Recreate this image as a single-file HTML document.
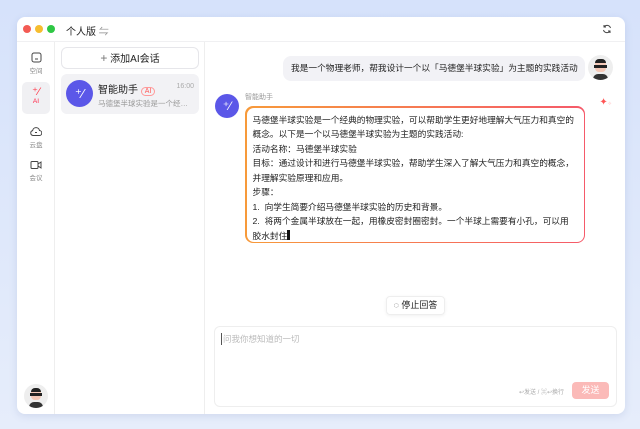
<!DOCTYPE html><html><head><meta charset="utf-8"><style>
*{margin:0;padding:0;box-sizing:border-box}
body{width:640px;height:429px;background:linear-gradient(180deg,#d6e2fb,#e6edfb);font-family:"Liberation Sans","Noto Sans CJK SC",sans-serif;position:relative;overflow:hidden;color:#222}
.win{position:absolute;left:17px;top:17px;width:608px;height:397px;background:#fff;border-radius:8px;box-shadow:0 2px 8px rgba(80,100,160,.15);overflow:hidden}
.tb{height:25px;border-bottom:1px solid #f0f0f2;position:relative}
.dot{position:absolute;top:8px;width:8px;height:8px;border-radius:50%}
.side{position:absolute;left:0;top:25px;width:38px;bottom:0;border-right:1px solid #eee}
.list{position:absolute;left:38px;top:25px;width:150px;bottom:0;border-right:1px solid #eee}
.chat{position:absolute;left:188px;top:25px;right:0;bottom:0}
.ic{position:absolute;left:5px;width:28px;text-align:center;font-size:6.5px;color:#888}
.av{position:absolute;border-radius:50%;background:#5b57e8;color:#fff}
.ava{position:absolute;border-radius:50%;background:#eee;overflow:hidden}
</style></head><body>
<div class="win">
 <div class="tb">
  <div class="dot" style="left:6px;background:#f35b54"></div>
  <div class="dot" style="left:18px;background:#f6bd2f"></div>
  <div class="dot" style="left:30px;background:#2ec744"></div>
  <div style="position:absolute;left:49px;top:6px;font-size:10px">个人版 <span style="color:#888">⇋</span></div>
  <svg style="position:absolute;right:13px;top:7px" width="10" height="10" viewBox="0 0 10 10"><path d="M8.5 4A3.6 3.6 0 0 0 2 3M1.5 6A3.6 3.6 0 0 0 8 7" fill="none" stroke="#444" stroke-width="1"/><path d="M2 1v2h2M8 9V7H6" fill="none" stroke="#444" stroke-width="1"/></svg>
 </div>
 <div class="side">
  <div class="ic" style="top:10px"><svg width="11" height="11" viewBox="0 0 11 11"><rect x="1" y="1" width="9" height="9" rx="2" fill="none" stroke="#444"/><path d="M4 7h3" stroke="#444"/></svg><div>空间</div></div>
  <div class="ic" style="top:40px;height:32px;background:#f0f0f3;border-radius:5px;color:#f24;padding-top:4px"><div style="font-size:11px;color:#f34;line-height:12px">⁺⁄</div><div>AI</div></div>
  <div class="ic" style="top:84px"><svg width="12" height="11" viewBox="0 0 12 11"><path d="M3 9.5h6a2.5 2.5 0 0 0 .5-5A3.5 3.5 0 0 0 2.6 4.6 2.5 2.5 0 0 0 3 9.5z" fill="none" stroke="#444"/><path d="M5 6.5h2" stroke="#444"/></svg><div>云盘</div></div>
  <div class="ic" style="top:118px"><svg width="12" height="10" viewBox="0 0 12 10"><rect x="1" y="1.5" width="7" height="7" rx="1" fill="none" stroke="#444"/><path d="M8 4l3-2v6L8 6" fill="none" stroke="#444"/></svg><div>会议</div></div>
  <div class="ava" style="left:7px;top:342px;width:24px;height:24px"><div style="position:absolute;left:7px;top:4px;width:10px;height:12px;background:#f5c9b8;border-radius:4px;border-top:4px solid #222"></div><div style="position:absolute;left:6px;top:9px;width:12px;height:3px;background:#222"></div><div style="position:absolute;left:5px;top:18px;width:14px;height:8px;background:#333;border-radius:5px 5px 0 0"></div></div>
 </div>
 <div class="list">
  <div style="position:absolute;left:6px;top:5px;width:138px;height:22px;border:1px solid #e6e6ea;border-radius:6px;text-align:center;font-size:10px;line-height:20px"><span style="color:#777;font-size:12px">+</span> 添加AI会话</div>
  <div style="position:absolute;left:6px;top:32px;width:138px;height:40px;background:#f2f2f5;border-radius:6px">
   <div class="av" style="left:5px;top:6px;width:27px;height:27px;font-size:13px;text-align:center;line-height:27px">⁺⁄</div>
   <div style="position:absolute;left:37px;top:7px;font-size:10px">智能助手 <span style="font-size:7px;color:#f55;border:1px solid #f99;border-radius:6px;padding:0 3px">AI</span></div>
   <div style="position:absolute;right:5px;top:9px;font-size:7px;color:#aaa">16:00</div>
   <div style="position:absolute;left:37px;top:24px;font-size:7.5px;color:#999">马德堡半球实验是一个经…</div>
  </div>
 </div>
 <div class="chat">
  <div style="position:absolute;left:78px;top:14px;width:302px;height:25px;background:#f2f2f6;border-radius:8px;font-size:8.7px;line-height:25px;padding-left:8px;white-space:nowrap">我是一个物理老师，帮我设计一个以「马德堡半球实验」为主题的实践活动</div>
  <div class="ava" style="right:12px;top:13px;width:25px;height:25px"><div style="position:absolute;left:7px;top:4px;width:11px;height:13px;background:#f5c9b8;border-radius:4px;border-top:4px solid #222"></div><div style="position:absolute;left:6px;top:10px;width:13px;height:3px;background:#222"></div><div style="position:absolute;left:5px;top:19px;width:15px;height:8px;background:#333;border-radius:5px 5px 0 0"></div></div>
  <div class="av" style="left:10px;top:52px;width:24px;height:24px;font-size:12px;text-align:center;line-height:24px">⁺⁄</div>
  <div style="position:absolute;left:40px;top:50px;font-size:7px;color:#999">智能助手</div>
  <div style="position:absolute;right:13px;top:55px;color:#f55;font-size:10px">✦<span style="font-size:5px">⁘</span></div>
  <div style="position:absolute;left:40px;top:64px;width:340px;height:137px;border-radius:8px;padding:1.5px;background:linear-gradient(90deg,#f79a3a,#f55a6a)"><div style="background:#fff;border-radius:7px;height:100%;padding:5px 9px 5px 6px;font-size:8.7px;line-height:14.5px">马德堡半球实验是一个经典的物理实验，可以帮助学生更好地理解大气压力和真空的概念。以下是一个以马德堡半球实验为主题的实践活动:<br>活动名称：马德堡半球实验<br>目标：通过设计和进行马德堡半球实验，帮助学生深入了解大气压力和真空的概念，并理解实验原理和应用。<br>步骤：<br>1.&nbsp; 向学生简要介绍马德堡半球实验的历史和背景。<br>2.&nbsp; 将两个金属半球放在一起，用橡皮密封圈密封。一个半球上需要有小孔，可以用<br>胶水封住<span style="display:inline-block;width:3px;height:10px;background:#111;vertical-align:-1px"></span></div></div>
  <div style="position:absolute;left:181px;top:254px;width:59px;height:19px;border:1px solid #eee;border-radius:4px;box-shadow:0 1px 3px rgba(0,0,0,.06);font-size:9px;line-height:17px;text-align:center">◌ 停止回答</div>
  <div style="position:absolute;left:9px;top:284px;width:403px;height:81px;border:1px solid #eee;border-radius:6px">
   <div style="position:absolute;left:6px;top:6px;font-size:8.5px;color:#bbb;border-left:1px solid #555;padding-left:1px">问我你想知道的一切</div>
   <div style="position:absolute;right:52px;top:60px;font-size:6px;color:#aaa">↩发送 / ⌘↩换行</div>
   <div style="position:absolute;right:7px;top:55px;width:37px;height:17px;background:#fbbab8;border-radius:4px;color:#fff;font-size:9px;text-align:center;line-height:17px">发送</div>
  </div>
 </div>
</div>
</body></html>
